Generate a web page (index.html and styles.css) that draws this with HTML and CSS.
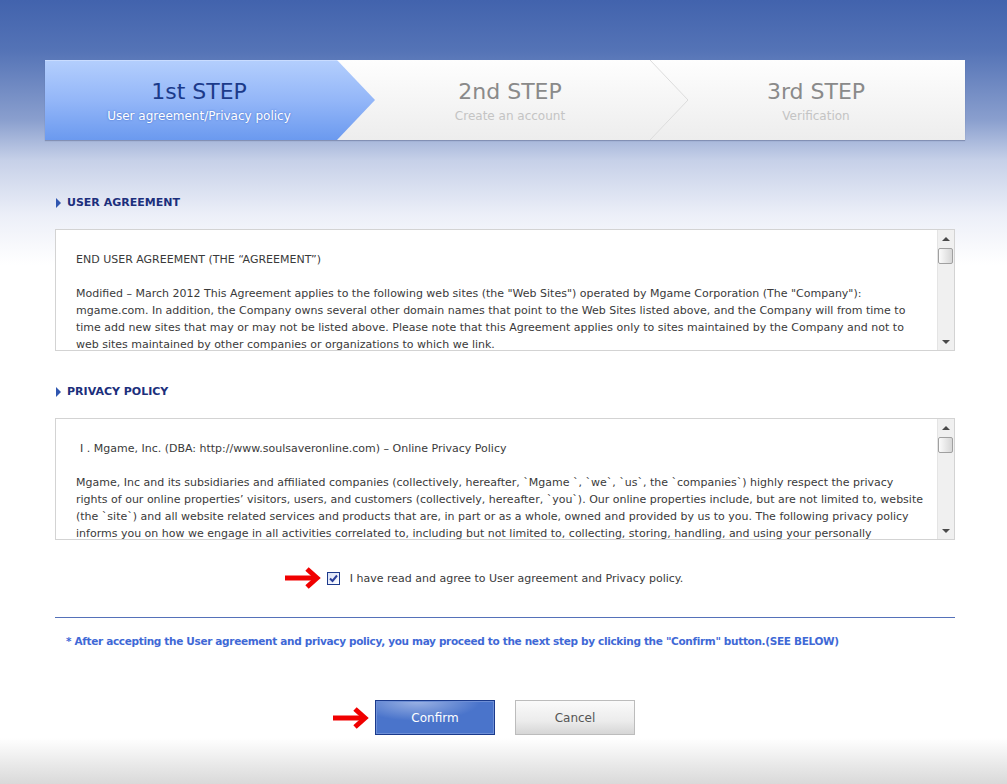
FILE: index.html
```html
<!DOCTYPE html>
<html lang="en">
<head>
    <meta charset="UTF-8">
    <title>Sign Up - Step 1</title>
    <link rel="stylesheet" href="styles.css">
</head>
<body>

<div class="page">
    <div class="steps">
        <div class="step current">
            <h3>1st STEP</h3>
            <p>User agreement/Privacy policy</p>
        </div>
        <div class="step">
            <h3>2nd STEP</h3>
            <p>Create an account</p>
            <svg class="chevron" width="40" height="80" viewBox="0 0 40 80">
                <polyline points="1,0 39,40 1,80" fill="none" stroke="#dcdcdc" stroke-width="1"/>
            </svg>
        </div>
        <div class="step">
            <h3>3rd STEP</h3>
            <p>Verification</p>
        </div>
    </div>

    <div class="content">
        <h2 class="sec-title">USER AGREEMENT</h2>
        <div class="terms">
            <div class="terms-text">
                <p>END USER AGREEMENT (THE “AGREEMENT”)</p>
                <p>Modified – March 2012 This Agreement applies to the following web sites (the "Web Sites") operated by Mgame Corporation (The "Company"):<br>
                mgame.com. In addition, the Company owns several other domain names that point to the Web Sites listed above, and the Company will from time to<br>
                time add new sites that may or may not be listed above. Please note that this Agreement applies only to sites maintained by the Company and not to<br>
                web sites maintained by other companies or organizations to which we link.</p>
            </div>
            <div class="scrollbar">
                <span class="sb-btn sb-up"></span>
                <span class="sb-thumb"></span>
                <span class="sb-track"></span>
                <span class="sb-btn sb-down"></span>
            </div>
        </div>

        <h2 class="sec-title">PRIVACY POLICY</h2>
        <div class="terms">
            <div class="terms-text">
                <p class="lead">I . Mgame, Inc. (DBA: http://www.soulsaveronline.com) – Online Privacy Policy</p>
                <p>Mgame, Inc and its subsidiaries and affiliated companies (collectively, hereafter, `Mgame `, `we`, `us`, the `companies`) highly respect the privacy<br>
                rights of our online properties’ visitors, users, and customers (collectively, hereafter, `you`). Our online properties include, but are not limited to, website<br>
                (the `site`) and all website related services and products that are, in part or as a whole, owned and provided by us to you. The following privacy policy<br>
                informs you on how we engage in all activities correlated to, including but not limited to, collecting, storing, handling, and using your personally</p>
            </div>
            <div class="scrollbar">
                <span class="sb-btn sb-up"></span>
                <span class="sb-thumb"></span>
                <span class="sb-track"></span>
                <span class="sb-btn sb-down"></span>
            </div>
        </div>

        <div class="agree-row">
            <label class="agree">
                <svg class="red-arrow" width="36" height="24" viewBox="0 0 36 24">
                    <line x1="0" y1="12" x2="31" y2="12" stroke="#f00000" stroke-width="5"/>
                    <polyline points="22,3 32,12 22,21" fill="none" stroke="#f00000" stroke-width="5"/>
                </svg>
                <span class="check">
                    <svg width="9" height="9" viewBox="0 0 9 9">
                        <polyline points="1,4.5 3.5,7 8,1.5" fill="none" stroke="#2a3f9a" stroke-width="2"/>
                    </svg>
                </span>
                I have read and agree to User agreement and Privacy policy.
            </label>
        </div>

        <hr class="rule">

        <p class="notice">* After accepting the User agreement and privacy policy, you may proceed to the next step by clicking the "Confirm" button.(SEE BELOW)</p>

        <div class="buttons">
            <button class="btn btn-confirm">
                <svg class="red-arrow" width="36" height="24" viewBox="0 0 36 24">
                    <line x1="0" y1="12" x2="31" y2="12" stroke="#f00000" stroke-width="5"/>
                    <polyline points="22,3 32,12 22,21" fill="none" stroke="#f00000" stroke-width="5"/>
                </svg>
                Confirm
            </button>
            <button class="btn btn-cancel">Cancel</button>
        </div>
    </div>
</div>

</body>
</html>
```

FILE: styles.css
```css
* {
    margin: 0;
    padding: 0;
    box-sizing: border-box;
}

html, body {
    min-height: 100%;
}

body {
    font-family: "DejaVu Sans", Verdana, sans-serif;
    font-size: 11px;
    color: #3a3a3a;
    background: linear-gradient(to bottom,
        #4263ad 0,
        #5473b6 50px,
        #8a9fce 120px,
        #c6d0e8 160px,
        #eceff8 215px,
        #ffffff 265px,
        #ffffff 738px,
        #d9d9d9 784px);
    height: 784px;
    overflow: hidden;
}

.page {
    width: 920px;
    margin-left: 45px;
    padding-top: 60px;
}

/* step bar */

.steps {
    display: grid;
    grid-template-columns: 308px 314px 298px;
    height: 80px;
    background: linear-gradient(to bottom, #fefefe, #ededed);
    box-shadow: 0 1px 1px rgba(60, 70, 110, 0.35);
}

.step {
    position: relative;
    text-align: center;
    padding-top: 18px;
}

.step h3 {
    position: relative;
    z-index: 1;
    font-size: 22px;
    font-weight: normal;
    line-height: 28px;
    color: #8a8a8a;
}

.step p {
    position: relative;
    z-index: 1;
    font-size: 12px;
    line-height: 16px;
    margin-top: 2px;
    color: #c4c4c4;
}

.step.current::before {
    content: "";
    position: absolute;
    left: 0;
    top: 0;
    width: 330px;
    height: 80px;
    background: linear-gradient(to bottom, #b3cefd, #93b6f8 50%, #6a99ef);
    border-top: 1px solid #c9dcff;
    clip-path: polygon(0 0, 292px 0, 330px 40px, 292px 80px, 0 80px);
}

.step.current h3 {
    color: #1b3a8a;
}

.step.current p {
    color: #ffffff;
    text-shadow: 0 0 2px #3f67c4;
}

.chevron {
    position: absolute;
    right: -22px;
    top: 0;
}

/* content */

.content {
    padding: 0 10px;
}

.sec-title {
    font-size: 11px;
    font-weight: bold;
    line-height: 16px;
    color: #1c2f7c;
    margin-top: 55px;
    padding-left: 12px;
    position: relative;
}

.sec-title::before {
    content: "";
    position: absolute;
    left: 1px;
    top: 3px;
    border-left: 5px solid #2f56b0;
    border-top: 5px solid transparent;
    border-bottom: 5px solid transparent;
}

.sec-title + .terms {
    margin-top: 18px;
}

.terms + .sec-title {
    margin-top: 33px;
}

.terms {
    display: flex;
    height: 122px;
    border: 1px solid #d3d3d3;
    background: #ffffff;
}

.terms-text {
    flex: 1;
    overflow: hidden;
    padding: 21px 20px 0 20px;
    line-height: 17px;
    white-space: nowrap;
}

.terms-text p {
    margin-bottom: 17px;
}

.terms-text .lead {
    padding-left: 4px;
}

/* scrollbar look */

.scrollbar {
    width: 17px;
    display: flex;
    flex-direction: column;
    background: #f0f0f0;
    border-left: 1px solid #e4e4e4;
    padding: 0 1px 0 0;
}

.sb-btn {
    height: 17px;
    display: flex;
    align-items: center;
    justify-content: center;
}

.sb-btn::before {
    content: "";
    border-left: 4px solid transparent;
    border-right: 4px solid transparent;
}

.sb-up::before {
    border-bottom: 4px solid #4a4a4a;
}

.sb-down::before {
    border-top: 4px solid #4a4a4a;
}

.sb-thumb {
    height: 16px;
    margin-top: 1px;
    background: linear-gradient(to right, #fbfbfb, #d6d6d6);
    border: 1px solid #a0a0a0;
    border-radius: 2px;
}

.sb-track {
    flex: 1;
}

/* agreement */

.agree-row {
    display: flex;
    justify-content: center;
    margin-top: 26px;
}

.agree {
    position: relative;
    display: flex;
    align-items: center;
    height: 24px;
    font-size: 11px;
    color: #3a3a3a;
}

.agree .red-arrow {
    position: absolute;
    left: -42px;
    top: 0;
}

.check {
    width: 13px;
    height: 13px;
    margin-right: 10px;
    border: 1px solid #1d3a8c;
    background: linear-gradient(135deg, #d6dff6, #ffffff);
    display: flex;
    align-items: center;
    justify-content: center;
}

.rule {
    border: none;
    border-top: 1px solid #5571b9;
    margin-top: 27px;
}

.notice {
    margin-top: 15px;
    padding-left: 11px;
    font-size: 10.5px;
    font-weight: bold;
    line-height: 16px;
    color: #3f69d6;
    letter-spacing: -0.33px;
}

.buttons {
    display: flex;
    justify-content: center;
    gap: 20px;
    margin-top: 51px;
}

.btn {
    position: relative;
    width: 120px;
    height: 35px;
    font-family: "DejaVu Sans", Verdana, sans-serif;
    font-size: 12px;
    cursor: pointer;
}

.btn-confirm {
    color: #ffffff;
    background: radial-gradient(ellipse 70px 22px at 35% 0, #9cb3e4, #4a74cb 90%) #4670c9;
    border: 1px solid #1a3a8c;
    box-shadow: inset 0 0 0 1px #6e8fd6;
}

.btn-confirm .red-arrow {
    position: absolute;
    left: -43px;
    top: 5px;
}

.btn-cancel {
    color: #555555;
    background: linear-gradient(to bottom, #fafafa, #ececec 60%, #d6d6d6);
    border: 1px solid #bcbcbc;
}
```
